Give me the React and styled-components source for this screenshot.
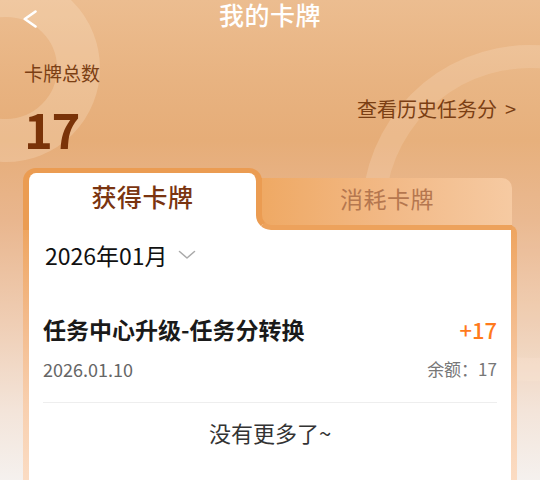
import React from "react";
import styled, { createGlobalStyle } from "styled-components";

const Global = createGlobalStyle`
  html, body { margin: 0; padding: 0; }
  body { font-family: "Noto Sans CJK SC", "Noto Sans", sans-serif; }
  * { box-sizing: border-box; }
`;

const Page = styled.div`
  position: relative;
  width: 540px;
  height: 480px;
  overflow: hidden;
  display: flex;
  flex-direction: column;
  font-family: "Noto Sans CJK SC", "Noto Sans", sans-serif;
  background: linear-gradient(
    180deg,
    #ecbd90 0px,
    #e8b381 80px,
    #e6ad78 140px,
    #e9b68e 220px,
    #efcdb3 320px,
    #f3e4d9 410px,
    #f5f1ee 480px
  );
`;

const Ring = styled.div`
  position: absolute;
  left: ${(p) => p.$cx - p.$r}px;
  top: ${(p) => p.$cy - p.$r}px;
  width: ${(p) => p.$r * 2}px;
  height: ${(p) => p.$r * 2}px;
  border-radius: 50%;
  border: ${(p) => p.$band}px solid ${(p) => p.$color};
  background: ${(p) => p.$fill || "transparent"};
  pointer-events: none;
  z-index: 0;
`;

const Layer = styled.div`
  position: relative;
  z-index: 1;
  display: flex;
  flex-direction: column;
  flex: 1;
`;

const NavBar = styled.div`
  height: 32px;
  display: grid;
  grid-template-columns: 1fr auto 1fr;
  align-items: start;
  padding: 0 23px;
`;

const BackButton = styled.div`
  margin-top: 10px;
  width: 14px;
  height: 18px;
  display: flex;
`;

const Title = styled.div`
  margin-top: 1px;
  font-size: 25px;
  line-height: 27px;
  font-weight: 500;
  color: #ffffff;
  letter-spacing: 0.5px;
`;

const Summary = styled.div`
  display: flex;
  justify-content: space-between;
  align-items: flex-end;
  padding: 28px 24px 0 24px;
`;

const SummaryLeft = styled.div`
  display: flex;
  flex-direction: column;
`;

const Label = styled.div`
  font-size: 19px;
  line-height: 26px;
  color: #7b3f14;
`;

const Count = styled.div`
  margin-top: 14px;
  font-size: 49px;
  line-height: 56px;
  font-weight: 700;
  color: #7a3308;
  letter-spacing: -1.5px;
`;

const HistoryLink = styled.div`
  margin-bottom: 33px;
  font-size: 20px;
  line-height: 28px;
  color: #7b3f14;
  display: flex;
  gap: 8px;
`;

const Panel = styled.div`
  margin: 12px 23px 0 23px;
  display: flex;
  flex-direction: column;
  flex: 1;
`;

const Tabs = styled.div`
  display: flex;
  height: 62px;
  margin-bottom: -5px;
  position: relative;
  z-index: 2;
`;

const ActiveTab = styled.div`
  flex: none;
  width: 239px;
  background: #ffffff;
  border-style: solid;
  border-color: #eb9c52;
  border-width: 5px 6px 0 6px;
  border-radius: 13px 13px 0 0;
  display: flex;
  align-items: center;
  justify-content: center;
  padding-bottom: 12px;
  font-size: 25px;
  font-weight: 500;
  color: #7a3410;
  letter-spacing: 0.5px;
`;

const TabSlot = styled.div`
  flex: 1;
  margin-left: -6px;
  padding-top: 10px;
  display: flex;
  background: linear-gradient(#ffffff, #ffffff) left bottom / 20px 20px no-repeat;
`;

const InactiveTab = styled.div`
  flex: 1;
  margin-right: 5px;
  border-left: 6px solid #eb9c52;
  border-bottom: 5px solid #eda25c;
  border-radius: 0 10px 0 15px;
  background: linear-gradient(90deg, #efa964 0%, #f2b986 50%, #f6caa2 100%);
  display: flex;
  align-items: center;
  justify-content: center;
  padding-bottom: 7px;
  font-size: 23px;
  color: #b5774f;
  letter-spacing: 0.5px;
`;

const Frame = styled.div`
  flex: 1;
  padding: 5px 6px 0 6px;
  border-top-right-radius: 8px;
  background: linear-gradient(180deg, #eea45e 0%, #f3b988 35%, #f8cfae 70%, #fbdcc3 100%);
  display: flex;
  flex-direction: column;
`;

const Body = styled.div`
  flex: 1;
  background: #ffffff;
  padding: 0 14px;
`;

const MonthRow = styled.div`
  height: 50px;
  display: flex;
  align-items: center;
  gap: 10px;
  padding-left: 2px;
  font-size: 23px;
  color: #111111;
`;

const Item = styled.div`
  padding-top: 34px;
`;

const ItemTop = styled.div`
  display: flex;
  justify-content: space-between;
  align-items: baseline;
`;

const ItemTitle = styled.div`
  font-size: 23px;
  line-height: 30px;
  font-weight: 700;
  color: #1a1a1a;
`;

const Amount = styled.div`
  font-size: 22px;
  line-height: 30px;
  font-weight: 500;
  color: #ff7a1c;
`;

const ItemMeta = styled.div`
  margin-top: 14px;
  display: flex;
  justify-content: space-between;
  font-size: 18px;
  line-height: 22px;
  color: #666666;
`;

const Balance = styled.span`
  font-size: 17px;
  color: #777777;
`;

const Divider = styled.div`
  margin-top: 22px;
  height: 1px;
  background: #eeeeee;
`;

const NoMore = styled.div`
  margin-top: 14px;
  text-align: center;
  font-size: 22px;
  line-height: 30px;
  color: #333333;
`;

export default function App() {
  return (
    <>
      <Global />
      <Page>
        <Ring $cx={6} $cy={68} $r={94} $band={43} $color="rgba(255,240,225,0.22)" />
        <Ring $cx={530} $cy={213} $r={168} $band={23} $color="rgba(255,235,215,0.16)" $fill="rgba(255,230,200,0.06)" />
        <Layer>
          <NavBar>
            <BackButton>
              <svg width="14" height="18" viewBox="0 0 14 18" fill="none">
                <path d="M12.5 1.5 L1.8 9 L12.5 16.5" stroke="#ffffff" strokeWidth="2.6" strokeLinecap="round" strokeLinejoin="round" />
              </svg>
            </BackButton>
            <Title>我的卡牌</Title>
            <div />
          </NavBar>
          <Summary>
            <SummaryLeft>
              <Label>卡牌总数</Label>
              <Count>17</Count>
            </SummaryLeft>
            <HistoryLink>
              <span>查看历史任务分</span>
              <span>&gt;</span>
            </HistoryLink>
          </Summary>
          <Panel>
            <Tabs>
              <ActiveTab>获得卡牌</ActiveTab>
              <TabSlot>
                <InactiveTab>消耗卡牌</InactiveTab>
              </TabSlot>
            </Tabs>
            <Frame>
              <Body>
                <MonthRow>
                  <span>2026年01月</span>
                  <svg width="18" height="10" viewBox="0 0 18 10" fill="none">
                    <path d="M1.5 1.5 L9 8 L16.5 1.5" stroke="#aaaaaa" strokeWidth="1.5" strokeLinecap="round" strokeLinejoin="round" />
                  </svg>
                </MonthRow>
                <Item>
                  <ItemTop>
                    <ItemTitle>任务中心升级-任务分转换</ItemTitle>
                    <Amount>+17</Amount>
                  </ItemTop>
                  <ItemMeta>
                    <span>2026.01.10</span>
                    <Balance>余额：17</Balance>
                  </ItemMeta>
                  <Divider />
                </Item>
                <NoMore>没有更多了~</NoMore>
              </Body>
            </Frame>
          </Panel>
        </Layer>
      </Page>
    </>
  );
}
